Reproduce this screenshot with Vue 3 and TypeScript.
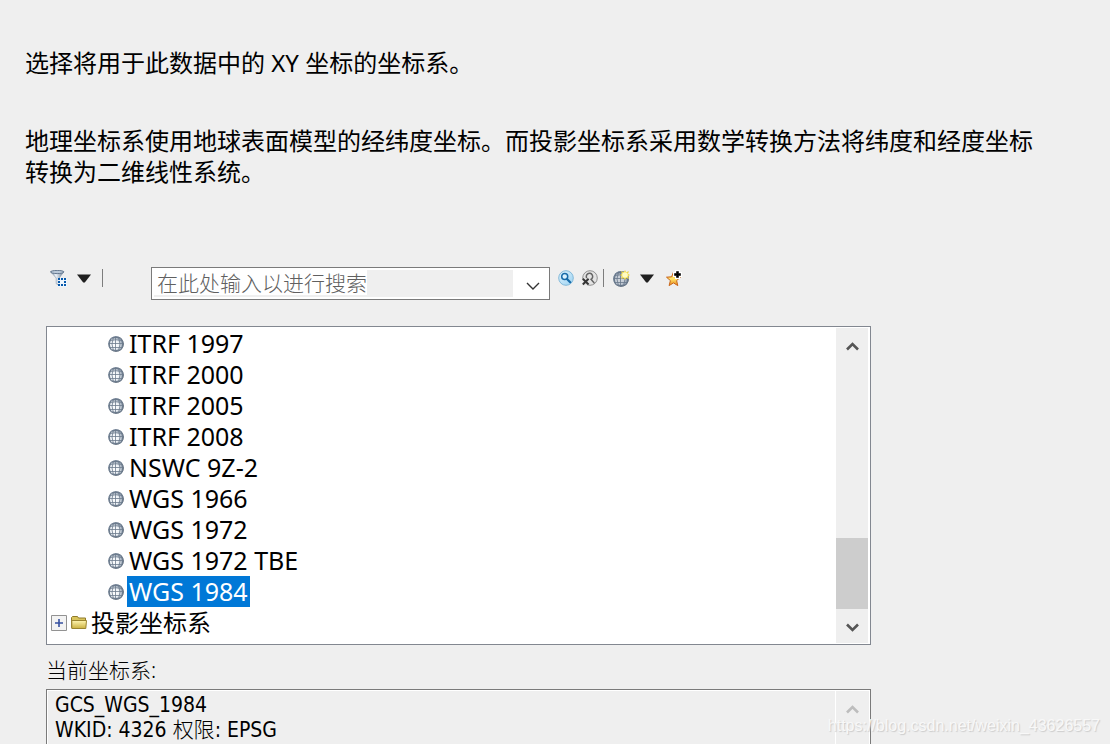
<script setup lang="ts">
import { ref } from 'vue'

const systems: string[] = [
  'ITRF 1997',
  'ITRF 2000',
  'ITRF 2005',
  'ITRF 2008',
  'NSWC 9Z-2',
  'WGS 1966',
  'WGS 1972',
  'WGS 1972 TBE',
  'WGS 1984',
]
const selected = ref('WGS 1984')
const query = ref('')
</script>

<template>
  <main class="page">
    <section class="intro">
      <p class="lead">选择将用于此数据中的 XY 坐标的坐标系。</p>
      <p>地理坐标系使用地球表面模型的经纬度坐标。而投影坐标系采用数学转换方法将纬度和经度坐标转换为二维线性系统。</p>
    </section>

    <svg class="defs" aria-hidden="true">
      <defs>
        <linearGradient id="ball" x1="0" y1="0" x2="1" y2="1">
          <stop offset="0" stop-color="#8d9cae" />
          <stop offset="1" stop-color="#5b6673" />
        </linearGradient>
        <radialGradient id="shine" cx="0.42" cy="0.55" r="0.58">
          <stop offset="0" stop-color="#ffffff" />
          <stop offset="0.5" stop-color="#eef2f6" />
          <stop offset="1" stop-color="#7c8c9f" />
        </radialGradient>
        <linearGradient id="steel" x1="0" y1="0" x2="1" y2="0">
          <stop offset="0" stop-color="#6f8299" />
          <stop offset="0.4" stop-color="#eef4fa" />
          <stop offset="1" stop-color="#62758c" />
        </linearGradient>
        <linearGradient id="blue" x1="0" y1="0" x2="1" y2="1">
          <stop offset="0" stop-color="#e2f4fd" />
          <stop offset="1" stop-color="#9bd2f2" />
        </linearGradient>
        <linearGradient id="gold" x1="0" y1="0" x2="0" y2="1">
          <stop offset="0" stop-color="#f6a53a" />
          <stop offset="0.5" stop-color="#ffe56a" />
          <stop offset="1" stop-color="#e8861a" />
        </linearGradient>
        <linearGradient id="paper" x1="0" y1="0" x2="0" y2="1">
          <stop offset="0" stop-color="#fff5b0" />
          <stop offset="1" stop-color="#cbb13f" />
        </linearGradient>
        <symbol id="globe" viewBox="0 0 16 16">
          <circle cx="8" cy="8" r="7.5" fill="url(#shine)" stroke="url(#ball)" stroke-width="0.9" />
          <g fill="none" stroke="#6c7b8d" stroke-width="0.8">
            <path d="M7.5 .5v15M.6 7.500h14.800M1.700 4.500Q8 3 14.300 4.500M1.700 11.500h12.600" />
            <path d="M5.500 1Q2.500 8 5.500 15M10.500 1Q13.500 8 10.500 15" />
            <path d="M3 2.500Q-.4 8 3 13.500M13 2.500Q16.400 8 13 13.500" stroke-width="1.100" />
            <path d="M3.500 2.200Q8 .6 12.500 2.200M3.500 13.800Q8 15.400 12.500 13.800" stroke-width="1.100" />
          </g>
        </symbol>
      </defs>
    </svg>

    <section class="panel">
      <div class="toolbar">
        <button class="tool filter" aria-label="过滤器">
          <svg width="17" height="17" viewBox="0 0 17 17">
            <path d="M.5 1.5 6.2 8v5.7l3 1.8V8L14 1.5z" fill="url(#steel)" stroke="#8293a7" stroke-width=".6" />
            <ellipse cx="7.2" cy="2" rx="6.7" ry="1.6" fill="#b9c8d8" stroke="#65788f" />
            <path d="M8 8h9v9H8z" fill="#eef6fd" />
            <path d="M8 8h2v2H8zm3 0h2v2h-2zm3 0h2v2h-2zM8 11h2v2H8zm6 0h2v2h-2zm-6 3h2v2H8zm3 0h2v2h-2zm3 0h2v2h-2z" fill="#0759ac" />
          </svg>
        </button>
        <button class="tool arrow" aria-label="过滤器选项">
          <svg width="14" height="9" viewBox="0 0 14 9"><path d="M0 .5h14L7.8 8.5H6.2z" fill="#202020" /></svg>
        </button>
        <span class="rule"></span>

        <div class="combo">
          <input v-model="query" type="text" aria-label="搜索坐标系" placeholder="在此处输入以进行搜索" />
          <button class="drop" aria-label="搜索历史">
            <svg width="14" height="8" viewBox="0 0 14 8"><path d="m1 1 6 6 6-6" fill="none" stroke="#333" stroke-width="1.4" /></svg>
          </button>
        </div>

        <button class="tool find" aria-label="搜索">
          <svg width="16" height="16" viewBox="0 0 16 16">
            <circle cx="8" cy="8" r="7.3" fill="url(#blue)" stroke="#83b9d9" />
            <circle cx="6.7" cy="6.5" r="3" fill="#d9f2ff" stroke="#176ba9" stroke-width="1.5" />
            <path d="m9 9 3.2 3.2" stroke="#176ba9" stroke-width="2.2" stroke-linecap="round" />
          </svg>
        </button>
        <button class="tool clear" aria-label="清除搜索">
          <svg width="17" height="17" viewBox="0 0 17 17">
            <circle cx="9" cy="8" r="7.3" fill="#e4e4e4" stroke="#929292" />
            <path d="M6 8.5A3.2 3.2 0 1 1 10 9.3l3 3.4" fill="none" stroke="#666" stroke-width="1.5" stroke-linecap="round" />
            <path d="m1.8 8.7 5.8 5.8m0-5.8-5.8 5.8" stroke="#e8e8e8" stroke-width="3.6" />
            <path d="m1.8 8.7 5.8 5.8m0-5.8-5.8 5.8" stroke="#363636" stroke-width="2" />
          </svg>
        </button>
        <span class="rule"></span>
        <button class="tool create" aria-label="添加坐标系">
          <svg width="17" height="17" viewBox="0 0 17 17">
            <circle cx="8" cy="8.5" r="7.6" fill="#71839a" />
            <use href="#globe" x="0" y="1" width="16" height="16" />
            <circle cx="8" cy="9" r="7.500" fill="#5f7288" opacity=".3" />
            <path d="m12 0 1.2 2.2L16 1l-1 2.8 2 1.2-2 1.3 1 2.7-2.8-1L12 10l-1.2-2L8 9l1-2.7L7 5l2-1.2L8 1l2.8 1.2z" fill="#f0d94a" />
            <circle cx="12" cy="5" r="2.8" fill="#fffcc4" />
          </svg>
        </button>
        <button class="tool arrow" aria-label="添加坐标系选项">
          <svg width="14" height="9" viewBox="0 0 14 9"><path d="M0 .5h14L7.8 8.5H6.2z" fill="#202020" /></svg>
        </button>
        <button class="tool favorite" aria-label="添加到收藏夹">
          <svg width="17" height="17" viewBox="0 0 17 17">
            <path d="m7.5 2 1.9 4.8 5.1.4-3.9 3.4 1.2 5-4.3-2.7-4.4 2.7 1.3-5L.5 7.2l5.1-.4z" fill="url(#gold)" stroke="#c9661b" />
            <path d="M9 0h5v2h2v5h-2v2H9V7H7V2h2z" fill="#fff" />
            <path d="M10.500 1.500h2v2h2v2h-2v2h-2v-2h-2v-2h2z" fill="#000" stroke="#000" stroke-width=".6" />
          </svg>
        </button>
      </div>

      <div class="listbox">
        <ul class="tree" role="tree" aria-label="坐标系">
          <li v-for="name in systems" :key="name" class="leaf" role="treeitem" :aria-selected="name === selected">
            <svg width="16" height="16" viewBox="0 0 16 16"><use href="#globe" /></svg>
            <button class="name" :class="{ active: name === selected }" @click="selected = name">{{ name }}</button>
          </li>
          <li class="branch" role="treeitem" aria-expanded="false">
            <button class="expand" aria-label="展开">
              <svg width="16" height="16" viewBox="0 0 16 16">
                <path d="M.5.5h15v15H.5z" fill="#f3f3f3" stroke="#929292" />
                <path d="M4 8h8M8 4v8" stroke="#3650a0" stroke-width="1.6" />
              </svg>
            </button>
            <svg class="folder" width="16" height="13" viewBox="0 0 16 13">
              <path d="M.5 11.5v-10l1-1h5l1 1.500h7v9z" fill="#d9c45c" stroke="#8f7a2a" />
              <path d="M.8 12.500V4.500h14.700l-.7 8z" fill="url(#paper)" stroke="#9a842f" />
            </svg>
            <button class="name">投影坐标系</button>
          </li>
        </ul>
        <div class="scroll">
          <button aria-label="向上滚动">
            <svg width="13" height="9" viewBox="0 0 13 9"><path d="m1 7.500 5.500-5.500 5.500 5.500" fill="none" stroke="#555" stroke-width="2.600" /></svg>
          </button>
          <div class="track"><div class="thumb"></div></div>
          <button aria-label="向下滚动">
            <svg width="13" height="9" viewBox="0 0 13 9"><path d="m1 1.500 5.500 5.500 5.500-5.500" fill="none" stroke="#555" stroke-width="2.600" /></svg>
          </button>
        </div>
      </div>

      <h2 class="caption">当前坐标系:</h2>

      <div class="details">
        <div class="text">
          <div>GCS_WGS_1984</div>
          <div>WKID: 4326 <span class="thin">权限</span>: EPSG</div>
        </div>
        <div class="scroll idle">
          <button aria-label="向上滚动" disabled>
            <svg width="13" height="9" viewBox="0 0 13 9"><path d="m1 7.500 5.500-5.500 5.500 5.500" fill="none" stroke="#bdbdbd" stroke-width="2.600" /></svg>
          </button>
        </div>
      </div>
    </section>

    <div class="watermark">https://blog.csdn.net/weixin_43626557</div>
  </main>
</template>

<style>
body {
  margin: 0;
  background: #efefef;
}
</style>

<style scoped>
.page {
  position: relative;
  display: flex;
  flex-direction: column;
  box-sizing: border-box;
  height: 100vh;
  overflow: hidden;
  background: #efefef;
  color: #000;
  font-family: "Noto Sans", "Noto Sans CJK SC", sans-serif;
}
button {
  margin: 0;
  padding: 0;
  border: 0;
  background: none;
  color: inherit;
  font: inherit;
}
svg {
  display: block;
  flex: none;
}
.defs {
  position: absolute;
  width: 0;
  height: 0;
}
.intro {
  padding: 47px 72px 0 25px;
  font-size: 24px;
  line-height: 31px;
}
.intro p {
  margin: 0;
}
.intro .lead {
  margin-bottom: 47px;
}
.panel {
  display: flex;
  flex: 1;
  flex-direction: column;
  min-height: 0;
  margin: 80px 239px 0 46px;
}
.toolbar {
  display: flex;
  align-items: flex-start;
  height: 59px;
}
.tool {
  display: flex;
  align-items: center;
  height: 22px;
}
.filter {
  margin: 0 10px 0 4px;
}
.rule {
  width: 1px;
  height: 18px;
  margin: 2px 0 0 11px;
  background: #7d7d7d;
}
.combo {
  display: flex;
  box-sizing: border-box;
  width: 399px;
  height: 33px;
  margin: 0 8px 0 48px;
  padding: 2px 0 2px 2px;
  border: 1px solid #7a7a7a;
  background: #fff;
}
.combo input {
  flex: 1;
  min-width: 0;
  padding: 0 3px 2px;
  border: 0;
  outline: 0;
  background: linear-gradient(#fff, #fff) 0 0 / 213px 25px no-repeat #efefef;
  font-family: "Noto Sans", "Noto Sans CJK SC", sans-serif;
  font-size: 21px;
  font-weight: 300;
}
.combo input::placeholder {
  color: #606060;
  opacity: 1;
}
.drop {
  display: flex;
  align-items: center;
  justify-content: center;
  width: 36px;
  padding-top: 4px;
  padding-left: 4px;
}
.clear {
  margin-left: 7px;
}
.clear + .rule {
  margin-left: 5px;
}
.create {
  margin: 0 10px 0 9px;
}
.favorite {
  margin-left: 12px;
}
.listbox {
  display: flex;
  flex: none;
  padding: 1px;
  border: 1px solid #828790;
  background: #fff;
}
.tree {
  flex: 1;
  margin: 0;
  padding: 0 0 5px;
  list-style: none;
  font-size: 25px;
  line-height: 31px;
}
.leaf,
.branch {
  display: flex;
  align-items: center;
  height: 31px;
}
.leaf {
  padding-left: 60px;
}
.leaf .name {
  height: 31px;
  margin-left: 3px;
  padding: 0 2px;
}
.name.active {
  background: #0078d7;
  color: #fff;
}
.branch {
  padding-left: 3px;
}
.branch .name {
  margin-left: 4px;
  font-size: 24px;
}
.folder {
  margin-left: 4px;
}
.scroll {
  display: flex;
  flex-direction: column;
  width: 32px;
  margin-right: 1px;
  background: #efefef;
}
.scroll button {
  display: flex;
  align-items: center;
  justify-content: center;
  height: 34px;
  padding-top: 3px;
}
.track {
  display: flex;
  flex: 1;
  flex-direction: column;
  justify-content: flex-end;
}
.thumb {
  height: 71px;
  background: #cdcdcd;
}
.caption {
  margin: 10px 0 3px;
  font-size: 21px;
  font-weight: 300;
  line-height: 31px;
}
.details {
  display: flex;
  flex: 1;
  min-height: 0;
  padding: 1px 1px 0;
  border: 1px solid #7a7a7a;
  border-bottom: 0;
  box-shadow: inset 1px 1px #fff, inset -1px 0 #fff;
}
.details .text {
  flex: 1;
  padding: 2px 7px;
  font-family: "DejaVu Sans Condensed", "Noto Sans CJK SC", sans-serif;
  font-size: 21px;
  line-height: 25px;
}
.thin {
  font-weight: 300;
}
.idle {
  border-left: 1px solid #fff;
}
.watermark {
  position: absolute;
  right: 10px;
  bottom: 8px;
  color: #f8f8f8;
  font-family: "Liberation Sans", Arial, sans-serif;
  font-size: 16px;
  line-height: 20px;
  text-shadow: 1px 1px 1px #ccc;
}
</style>
